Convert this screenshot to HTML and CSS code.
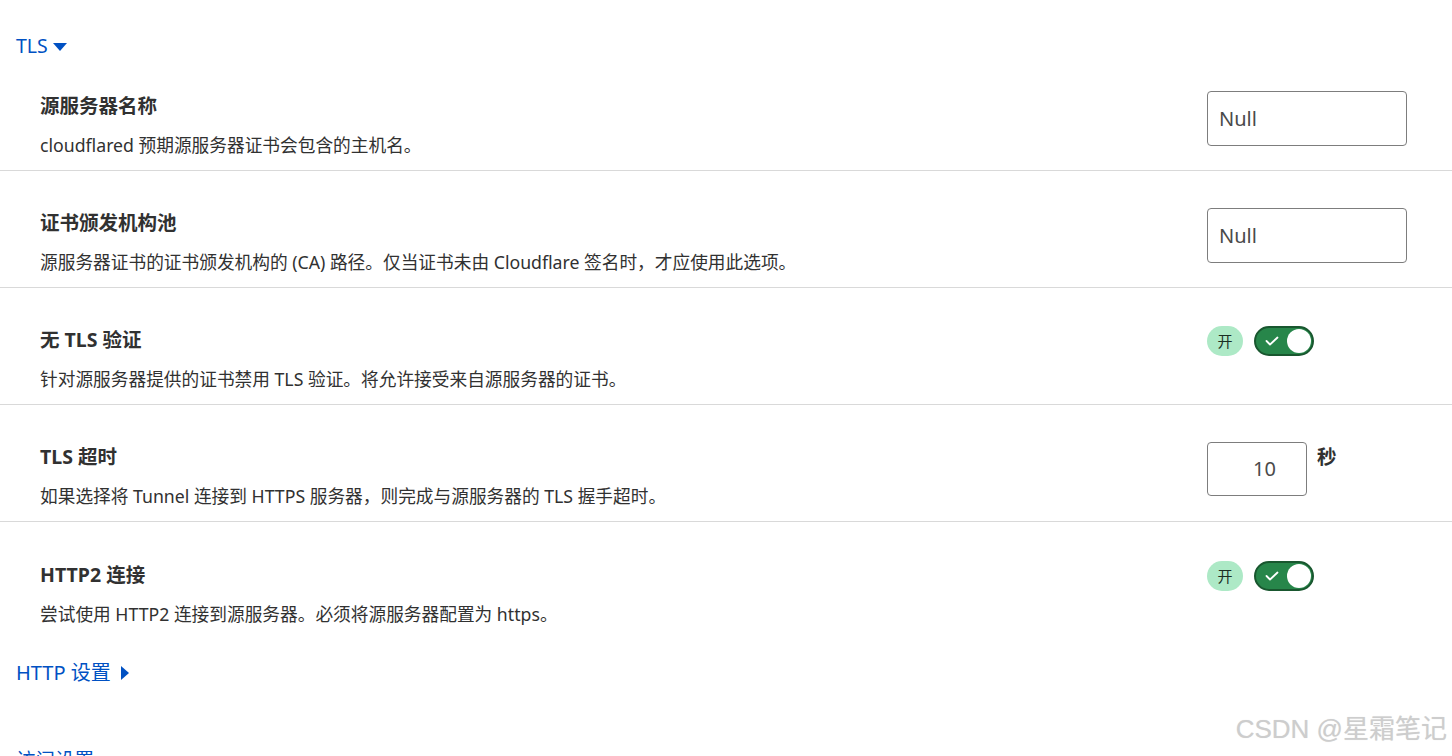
FILE: index.html
```html
<!DOCTYPE html>
<html lang="zh-CN">
<head>
<meta charset="utf-8">
<title>TLS</title>
<link rel="stylesheet" href="styles.css">
</head>
<body>
<div class="page">
  <div class="group-head open">
    <span class="group-label">TLS</span>
    <svg class="caret-down" width="14" height="8" viewBox="0 0 14 8"><path d="M0 0 H14 L7 8 Z" fill="#0051c3"/></svg>
  </div>

  <div class="rows">
    <div class="row first">
      <div class="info">
        <div class="title">源服务器名称</div>
        <div class="desc">cloudflared 预期源服务器证书会包含的主机名。</div>
      </div>
      <div class="control">
        <div class="input wide">Null</div>
      </div>
    </div>

    <div class="row">
      <div class="info">
        <div class="title">证书颁发机构池</div>
        <div class="desc">源服务器证书的证书颁发机构的 (CA) 路径。仅当证书未由 Cloudflare 签名时，才应使用此选项。</div>
      </div>
      <div class="control">
        <div class="input wide">Null</div>
      </div>
    </div>

    <div class="row">
      <div class="info">
        <div class="title">无 TLS 验证</div>
        <div class="desc">针对源服务器提供的证书禁用 TLS 验证。将允许接受来自源服务器的证书。</div>
      </div>
      <div class="control">
        <span class="badge">开</span>
        <span class="switch">
          <svg class="check" width="14" height="10" viewBox="0 0 14 10"><path d="M1.5 5 L5 8.5 L12.5 1.5" fill="none" stroke="#fff" stroke-width="1.8" stroke-linecap="round" stroke-linejoin="round"/></svg>
          <span class="knob"></span>
        </span>
      </div>
    </div>

    <div class="row">
      <div class="info">
        <div class="title">TLS 超时</div>
        <div class="desc">如果选择将 Tunnel 连接到 HTTPS 服务器，则完成与源服务器的 TLS 握手超时。</div>
      </div>
      <div class="control">
        <div class="input narrow">10</div>
        <span class="unit">秒</span>
      </div>
    </div>

    <div class="row last">
      <div class="info">
        <div class="title">HTTP2 连接</div>
        <div class="desc">尝试使用 HTTP2 连接到源服务器。必须将源服务器配置为 https。</div>
      </div>
      <div class="control">
        <span class="badge">开</span>
        <span class="switch">
          <svg class="check" width="14" height="10" viewBox="0 0 14 10"><path d="M1.5 5 L5 8.5 L12.5 1.5" fill="none" stroke="#fff" stroke-width="1.8" stroke-linecap="round" stroke-linejoin="round"/></svg>
          <span class="knob"></span>
        </span>
      </div>
    </div>
  </div>

  <div class="group-head closed">
    <span class="group-label">HTTP 设置</span>
    <svg class="caret-right" width="8" height="14" viewBox="0 0 8 14"><path d="M0 0 V14 L8 7 Z" fill="#0051c3"/></svg>
  </div>

  <div class="group-head next">
    <span class="group-label">访问设置</span>
  </div>
</div>
<div class="watermark">CSDN @星霜笔记</div>
</body>
</html>
```

FILE: styles.css
```css
html, body {
  margin: 0;
  padding: 0;
  background: #ffffff;
  height: 756px;
  overflow: hidden;
}

body {
  font-family: "Noto Sans", "Noto Sans CJK SC", sans-serif;
  color: #313131;
  position: relative;
}

.page {
  width: 1452px;
}

.group-head {
  display: flex;
  align-items: center;
  padding-left: 16px;
  color: #0051c3;
  height: 24px;
  overflow: visible;
}

.group-head.open {
  padding-top: 34px;
}

.group-head.closed {
  padding-top: 22px;
}

.group-head.next {
  padding-top: 63px;
}

.group-label {
  font-size: 19.5px;
  line-height: 24px;
}

.closed .group-label {
  font-size: 20px;
}

.caret-down {
  margin-left: 5px;
  margin-top: 1px;
}

.caret-right {
  margin-left: 10px;
}

.row {
  display: flex;
  justify-content: space-between;
  align-items: flex-start;
  padding: 37px 0 13px 40px;
  border-bottom: 1px solid #d9d9d9;
}

.row.first {
  padding-top: 33px;
}

.row.last {
  border-bottom: none;
  padding-top: 38px;
}

.title {
  font-size: 19.5px;
  font-weight: 700;
  line-height: 30px;
  height: 30px;
  color: #313131;
  white-space: nowrap;
}

.desc {
  font-size: 17.7px;
  line-height: 24px;
  height: 24px;
  margin-top: 12px;
  color: #313131;
  white-space: nowrap;
}

.control {
  width: 245px;
  display: flex;
  align-items: flex-start;
  flex-shrink: 0;
}

.input {
  box-sizing: border-box;
  height: 55px;
  border: 1px solid #7d7d7d;
  border-radius: 4px;
  font-size: 20px;
  line-height: 53px;
  color: #4a4a4a;
  padding-left: 11px;
}

.input.wide {
  width: 200px;
}

.input.narrow {
  width: 100px;
  height: 54px;
  line-height: 52px;
  text-align: right;
  padding-left: 0;
  padding-right: 30px;
}

.unit {
  margin-left: 10px;
  font-size: 19.5px;
  font-weight: 700;
  line-height: 30px;
}

.badge {
  width: 36px;
  height: 30px;
  border-radius: 15px;
  background: #ade9c6;
  color: #1b2f23;
  font-size: 15px;
  line-height: 30px;
  text-align: center;
  margin-top: 1px;
}

.switch {
  box-sizing: border-box;
  width: 60px;
  height: 30px;
  margin-left: 11px;
  margin-top: 1px;
  border-radius: 15px;
  background: #27864a;
  border: 2px solid #19572f;
  display: flex;
  align-items: center;
  justify-content: space-between;
  padding: 0 1px 0 9px;
}

.check {
  display: block;
}

.knob {
  width: 24px;
  height: 24px;
  border-radius: 50%;
  background: #ffffff;
}

.watermark {
  position: absolute;
  right: 5px;
  top: 712px;
  font-family: "Liberation Sans", "Noto Sans CJK SC", sans-serif;
  font-size: 26px;
  line-height: 34px;
  color: #cdcdcd;
  text-shadow: 0 0 1px #e2e2e2;
}
```
